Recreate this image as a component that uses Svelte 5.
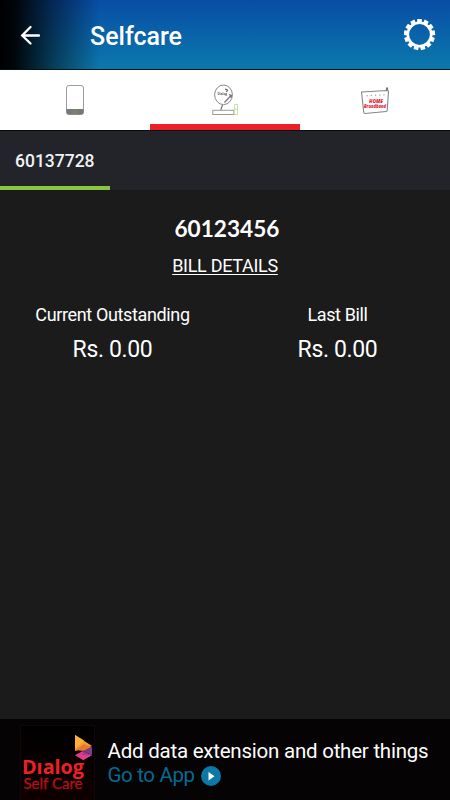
<script>
  const teeth = Array.from({ length: 13 }, (_, i) => (i * 360) / 13);
  const bills = [
    { label: 'Current Outstanding', value: 'Rs. 0.00' },
    { label: 'Last Bill', value: 'Rs. 0.00' }
  ];
</script>

<div class="screen">
  <header>
    <svg class="back" width="20" height="20" viewBox="0 0 20 20">
      <path d="M19 10.500H2.500M10.500 2L2.200 10.500l8.300 8" fill="none" stroke="#fff" stroke-width="2.300" stroke-linecap="round" />
    </svg>
    <h1>Selfcare</h1>
    <svg class="gear" width="32" height="32" viewBox="-15.500 -15.500 32 32">
      <circle r="11.700" fill="none" stroke="#fff" stroke-width="2.600" />
      {#each teeth as angle}
        <rect x="-2.300" y="-15.600" width="4.600" height="4" fill="#fff" transform="rotate({angle})" />
      {/each}
    </svg>
  </header>

  <nav>
    <div class="tab">
      <svg width="50" height="50" viewBox="0 0 50 50">
        <rect x="16.500" y="10.500" width="17" height="29" rx="2.500" fill="#fff" stroke="#9c9c9e" />
        <path d="M16.500 34h17v3.500q0 2-2 2h-13q-2 0-2-2z" fill="#77787b" />
        <circle cx="25" cy="36.700" r="2" fill="none" stroke="#78984c" />
      </svg>
    </div>
    <div class="tab active">
      <svg width="50" height="50" viewBox="0 0 50 50">
        <ellipse cx="23.500" cy="19.800" rx="8.900" ry="9.800" fill="#fff" stroke="#888" />
        <path d="M22.500 30l-1.700 5M24.500 27.500l6.500-7M29 19.700l2.500.7-.5 2.600" fill="none" stroke="#777" stroke-width="1.200" />
        <path d="M25 14l2.500 1-1 2" fill="none" stroke="#555" stroke-width="1.100" />
        <text x="17.500" y="20" font-size="4" font-weight="700" fill="#555" textLength="9.500" lengthAdjust="spacingAndGlyphs">Dialog</text>
        <rect x="12.800" y="35.300" width="21.200" height="4.200" fill="#fff" stroke="#999" />
        <path d="M34.500 29.500h3v10h-3zM34.500 34h3" fill="#fff" stroke="#c8dfac" />
      </svg>
    </div>
    <div class="tab">
      <svg width="50" height="50" viewBox="0 0 50 50">
        <path d="M37 17v-4.500" stroke="#777" stroke-width="2.200" />
        <path d="M11.500 17L37.500 15.500q1 0 1 1l-1.300 19q-.1 1-1 1L15 38.500q-1 0-1.200-1z" fill="#fff" stroke="#858585" stroke-width="1.100" />
        <g fill="#aaa">
          <circle cx="17.200" cy="20.700" r=".8" /><circle cx="21.300" cy="20.500" r=".8" />
          <circle cx="25.500" cy="20.300" r=".8" /><circle cx="29.800" cy="20" r=".8" />
          <circle cx="34" cy="19.700" r=".8" fill="#a4ca6c" />
        </g>
        <g fill="#e3283a" font-weight="800" font-style="italic">
          <text x="19" y="28" font-size="4.600" textLength="14" lengthAdjust="spacingAndGlyphs">HOME</text>
          <text x="14" y="32.500" font-size="4.700" textLength="22" lengthAdjust="spacingAndGlyphs">Broadband</text>
        </g>
      </svg>
    </div>
  </nav>

  <div class="accounts"><div class="account">60137728</div></div>

  <main>
    <div class="number">
      <svg width="110" height="30" viewBox="-2 -6 110 30">
        <text x="0.500" y="17" textLength="105" lengthAdjust="spacingAndGlyphs">60123456</text>
      </svg>
    </div>
    <div class="details"><span>BILL DETAILS</span></div>
    <div class="bills">
      {#each bills as bill}
        <section>
          <div class="label">{bill.label}</div>
          <div class="value">{bill.value}</div>
        </section>
      {/each}
    </div>
  </main>

  <footer>
    <svg class="logo" width="75" height="75" viewBox="0 0 75 75">
      <defs>
        <linearGradient id="tile" x2="0" y2="1">
          <stop stop-color="#000" /><stop offset="1" stop-color="#100000" />
        </linearGradient>
        <linearGradient id="care" x2="0" y2="1">
          <stop stop-color="#d3161d" /><stop offset="1" stop-color="#980b10" />
        </linearGradient>
      </defs>
      <rect x=".5" y=".5" width="74" height="76" fill="url(#tile)" stroke="#0d0909" />
      <path d="M55 10l17 11-17 5z" fill="#f9a02c" />
      <path d="M55 10l9 5.500-9 8z" fill="#fbb13c" />
      <path d="M55 25l9-6 8 3-8 4z" fill="#ee762d" />
      <path d="M63 26l9-4v8z" fill="#783d8c" />
      <path d="M63 26l9 4-9 5z" fill="#a63593" />
      <path d="M55 30l8-4v9z" fill="#cf4190" />
      <path d="M55 30l17 0-8.500 5z" fill="#e63b86" />
      <g class="dialog">
        <text x="2" y="48.700" font-size="20" textLength="62" lengthAdjust="spacingAndGlyphs">Dıalog</text>
        <text class="care" x="3.500" y="64" font-size="14.500" fill="url(#care)" textLength="59" lengthAdjust="spacingAndGlyphs">Self Care</text>
      </g>
    </svg>
    <div class="promo">
      <div class="headline">Add data extension and other things</div>
      <div class="link">
        <span>Go to App</span>
        <svg width="20" height="20" viewBox="0 0 20 20">
          <circle cx="10" cy="10" r="10" fill="#0b78a6" />
          <path d="M7.500 6l6 4.200-6 4.200z" fill="#fff" />
        </svg>
      </div>
    </div>
  </footer>
</div>

<style>
  :global(body) { background: #1b1b1b; }
  .screen {
    box-sizing: border-box; width: 450px; height: 800px; overflow: hidden;
    display: flex; flex-direction: column; background: #1b1b1b; color: #fff;
    font-family: Roboto, sans-serif;
  }
  header {
    box-sizing: border-box; height: 70px; flex: none; display: flex; align-items: center;
    padding: 0 14px 0 20px; border-bottom: 1px solid #001426;
    background: linear-gradient(90deg, #000 0, rgba(0, 0, 0, .94) 15px, rgba(0, 0, 0, .5) 52px, rgba(0, 0, 0, 0) 100px), linear-gradient(#084da6, #0b79ac);
  }
  .back { flex: none; }
  h1 { margin: 5px 0 0 50px; font-size: 25px; line-height: 30px; font-weight: 500; flex: 1; }
  nav { height: 60px; flex: none; display: flex; background: #fff; }
  .tab { box-sizing: border-box; flex: 1; display: flex; justify-content: center; padding-top: 5px; }
  .tab text { font-family: "Open Sans", sans-serif; }
  .active { border-bottom: 6px solid #ec2027; }
  .accounts {
    box-sizing: border-box; height: 60px; flex: none; display: flex;
    background: #22242a; border-top: 1px solid #080c10;
  }
  .account {
    box-sizing: border-box; width: 110px; padding: 20px 0 0 15px;
    font-size: 17.500px; line-height: 20px; font-weight: 500; color: #f2f2f2; border-bottom: 4px solid #8bc540;
  }
  main { flex: 1; padding-top: 24px; }
  .number { display: flex; justify-content: center; padding-left: 4px; }
  .number text { font: 700 22px Lato, sans-serif; fill: #fff; }
  .details { display: flex; justify-content: center; margin-top: 11px; font-size: 18px; line-height: 21px; letter-spacing: -.3px; }
  .details span { text-decoration: underline; text-decoration-thickness: 1px; text-underline-offset: 2px; text-decoration-skip-ink: none; }
  .bills { display: flex; margin-top: 28px; text-align: center; }
  section { flex: 1; }
  .label { font-size: 18px; line-height: 22px; letter-spacing: -.36px; }
  .value { margin-top: 10px; font-size: 23px; line-height: 28px; letter-spacing: -.35px; }
  footer { box-sizing: border-box; height: 81px; flex: none; display: flex; background: #050303; padding: 6px 0 0 20px; }
  .logo { flex: none; }
  .dialog text { font-family: "Open Sans", sans-serif; }
  .dialog text:first-child { font-weight: 700; fill: #ed2028; }
  .dialog .care { font-family: Lato, sans-serif; font-weight: 400; stroke: #b31218; stroke-width: .3px; }
  .promo { padding: 14px 0 0 12.500px; white-space: nowrap; }
  .headline { font-size: 20.500px; line-height: 25px; letter-spacing: -.23px; }
  .link { display: flex; align-items: center; gap: 6px; font-size: 20.500px; line-height: 23px; letter-spacing: -.35px; color: #076a92; }
</style>
